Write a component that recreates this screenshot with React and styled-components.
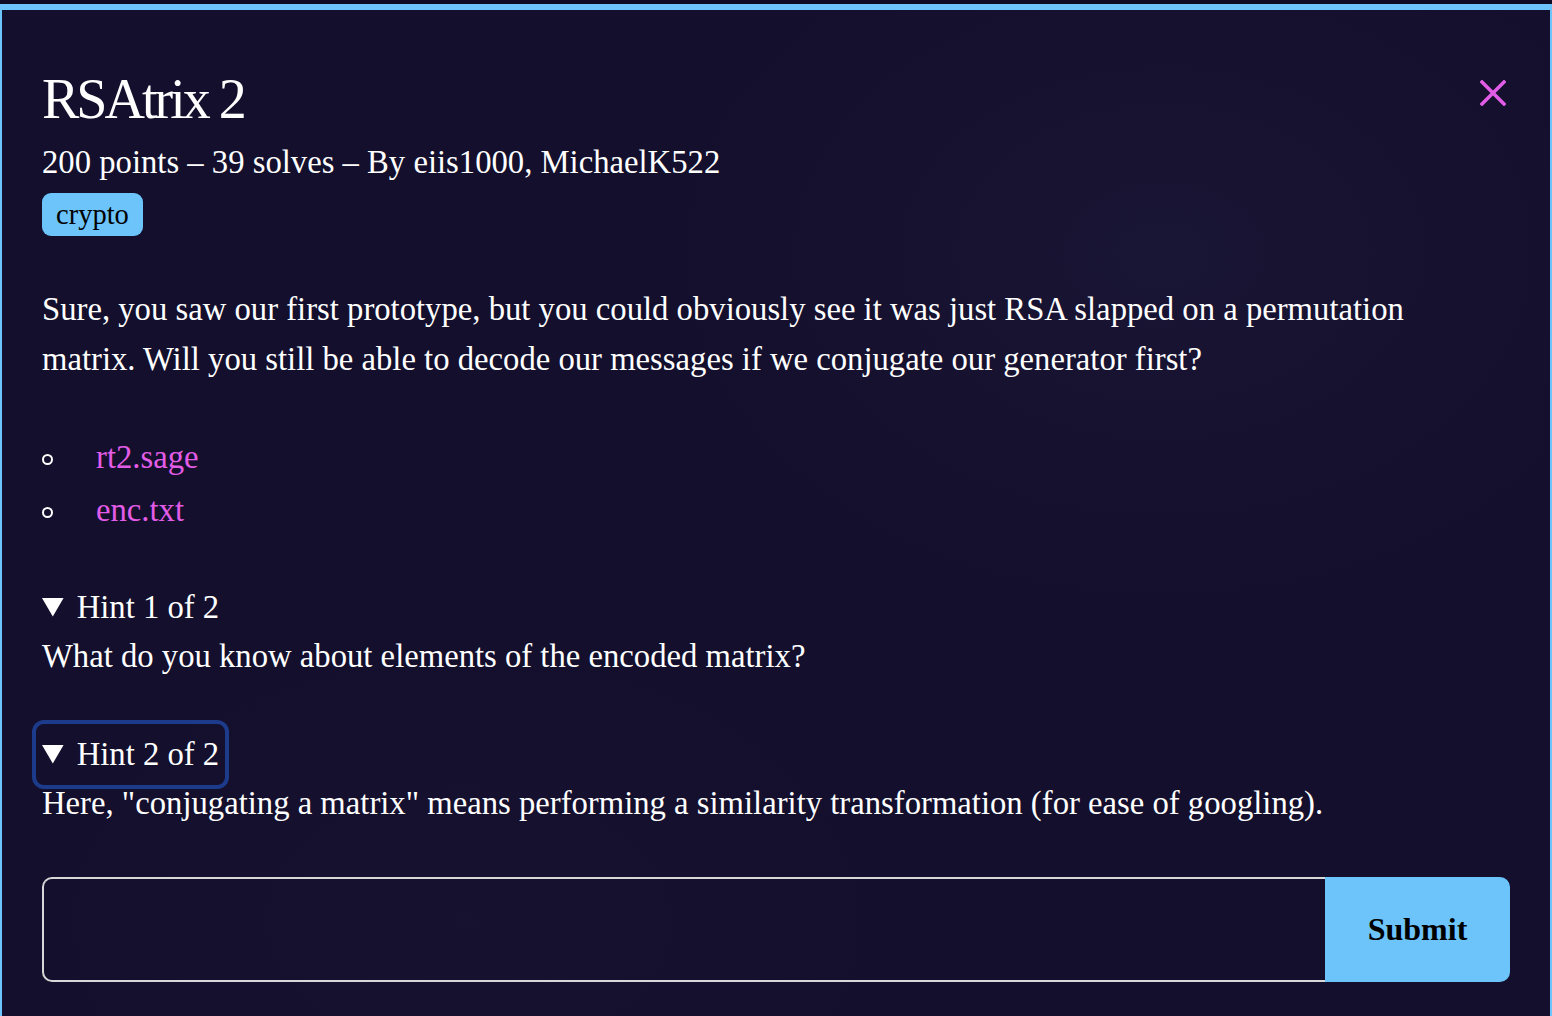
import React from "react";
import styled, { createGlobalStyle } from "styled-components";

const GlobalStyle = createGlobalStyle`
  html, body {
    margin: 0;
    padding: 0;
    background: #0f0b24;
  }
  body {
    font-family: "Liberation Serif", "Times New Roman", serif;
    color: #ffffff;
    overflow: hidden;
  }
`;

const Modal = styled.div`
  margin-top: 4px;
  border: 2px solid #6cc4fa;
  border-top-width: 6px;
  border-bottom: none;
  background-color: #130f2c;
  background-image:
    radial-gradient(ellipse 700px 500px at 75% 20%, rgba(40, 34, 70, 0.3), transparent 70%),
    radial-gradient(ellipse 600px 400px at 30% 75%, rgba(30, 26, 60, 0.25), transparent 70%);
  padding: 57px 40px 60px 40px;
  min-height: 1100px;
`;

const Header = styled.div`
  display: flex;
  justify-content: space-between;
  align-items: flex-start;
`;

const Title = styled.h1`
  margin: 0;
  font-size: 56px;
  line-height: 64px;
  font-weight: 400;
  letter-spacing: -3px;
`;

const Close = styled.button`
  margin-top: 9px;
  width: 34px;
  height: 34px;
  padding: 0;
  border: none;
  background: none;
  display: flex;
  align-items: center;
  justify-content: center;
  cursor: pointer;
`;

const Meta = styled.div`
  margin-top: 7px;
  font-size: 32.7px;
  line-height: 49px;
`;

const Tags = styled.div`
  display: flex;
  gap: 8px;
  margin-top: 6px;
`;

const Tag = styled.span`
  display: inline-flex;
  align-items: center;
  height: 43px;
  padding: 0 14px;
  border-radius: 9px;
  background: #6cc4fa;
  color: #000;
  font-size: 28.5px;
`;

const Text = styled.p`
  margin: ${(p) => p.$top || 0}px 0 0 0;
  max-width: 1440px;
  font-size: 32.7px;
  line-height: 49.5px;
`;

const Files = styled.ul`
  list-style: none;
  margin: 49px 0 0 0;
  padding: 0;
`;

const File = styled.li`
  display: flex;
  align-items: center;
  font-size: 32.7px;
  line-height: 49.5px;
  margin-bottom: 3.5px;

  &::before {
    content: "";
    width: 7px;
    height: 7px;
    border: 2px solid #ffffff;
    border-radius: 50%;
    margin-right: 43px;
    margin-top: 4px;
  }
`;

const FileLink = styled.a`
  color: #e35ce7;
  text-decoration: none;
`;

const Hint = styled.details`
  margin-top: ${(p) => p.$top}px;
  font-size: 32.7px;
  line-height: 49.5px;
`;

const HintTitle = styled.summary`
  width: fit-content;
  cursor: pointer;
  border-radius: 2px;
  outline: ${(p) => (p.$focused ? "4px solid #1d3b8b" : "none")};
  outline-offset: 6px;
`;

const Form = styled.form`
  display: flex;
  margin-top: 48px;
  height: 105px;
`;

const FlagInput = styled.input`
  flex: 1;
  box-sizing: border-box;
  height: 100%;
  border: 2px solid #d8d8d8;
  border-right: none;
  border-radius: 10px 0 0 10px;
  background: transparent;
  color: #fff;
  font-family: inherit;
  font-size: 32px;
  padding: 0 20px;
  outline: none;
`;

const Submit = styled.button`
  width: 185px;
  height: 100%;
  border: none;
  border-radius: 0 10px 10px 0;
  background: #6cc4fa;
  color: #000;
  font-family: "Liberation Serif", "Times New Roman", serif;
  font-weight: 700;
  font-size: 32px;
  cursor: pointer;
`;

function CloseIcon() {
  return (
    <svg width="26" height="26" viewBox="0 0 26 26">
      <path d="M2 2 L24 24 M24 2 L2 24" stroke="#e35ce7" strokeWidth="3.5" strokeLinecap="square" />
    </svg>
  );
}

export default function App() {
  return (
    <>
      <GlobalStyle />
      <Modal>
        <Header>
          <Title>RSAtrix 2</Title>
          <Close aria-label="Close">
            <CloseIcon />
          </Close>
        </Header>
        <Meta>200 points – 39 solves – By eiis1000, MichaelK522</Meta>
        <Tags>
          <Tag>crypto</Tag>
        </Tags>
        <Text $top={49}>
          Sure, you saw our first prototype, but you could obviously see it was just RSA slapped on a permutation
          matrix. Will you still be able to decode our messages if we conjugate our generator first?
        </Text>
        <Files>
          <File>
            <FileLink href="#">rt2.sage</FileLink>
          </File>
          <File>
            <FileLink href="#">enc.txt</FileLink>
          </File>
        </Files>
        <Hint open $top={47}>
          <HintTitle>Hint 1 of 2</HintTitle>
          <Text>What do you know about elements of the encoded matrix?</Text>
        </Hint>
        <Hint open $top={48}>
          <HintTitle $focused>Hint 2 of 2</HintTitle>
          <Text>Here, "conjugating a matrix" means performing a similarity transformation (for ease of googling).</Text>
        </Hint>
        <Form onSubmit={(e) => e.preventDefault()}>
          <FlagInput type="text" />
          <Submit type="submit">Submit</Submit>
        </Form>
      </Modal>
    </>
  );
}
